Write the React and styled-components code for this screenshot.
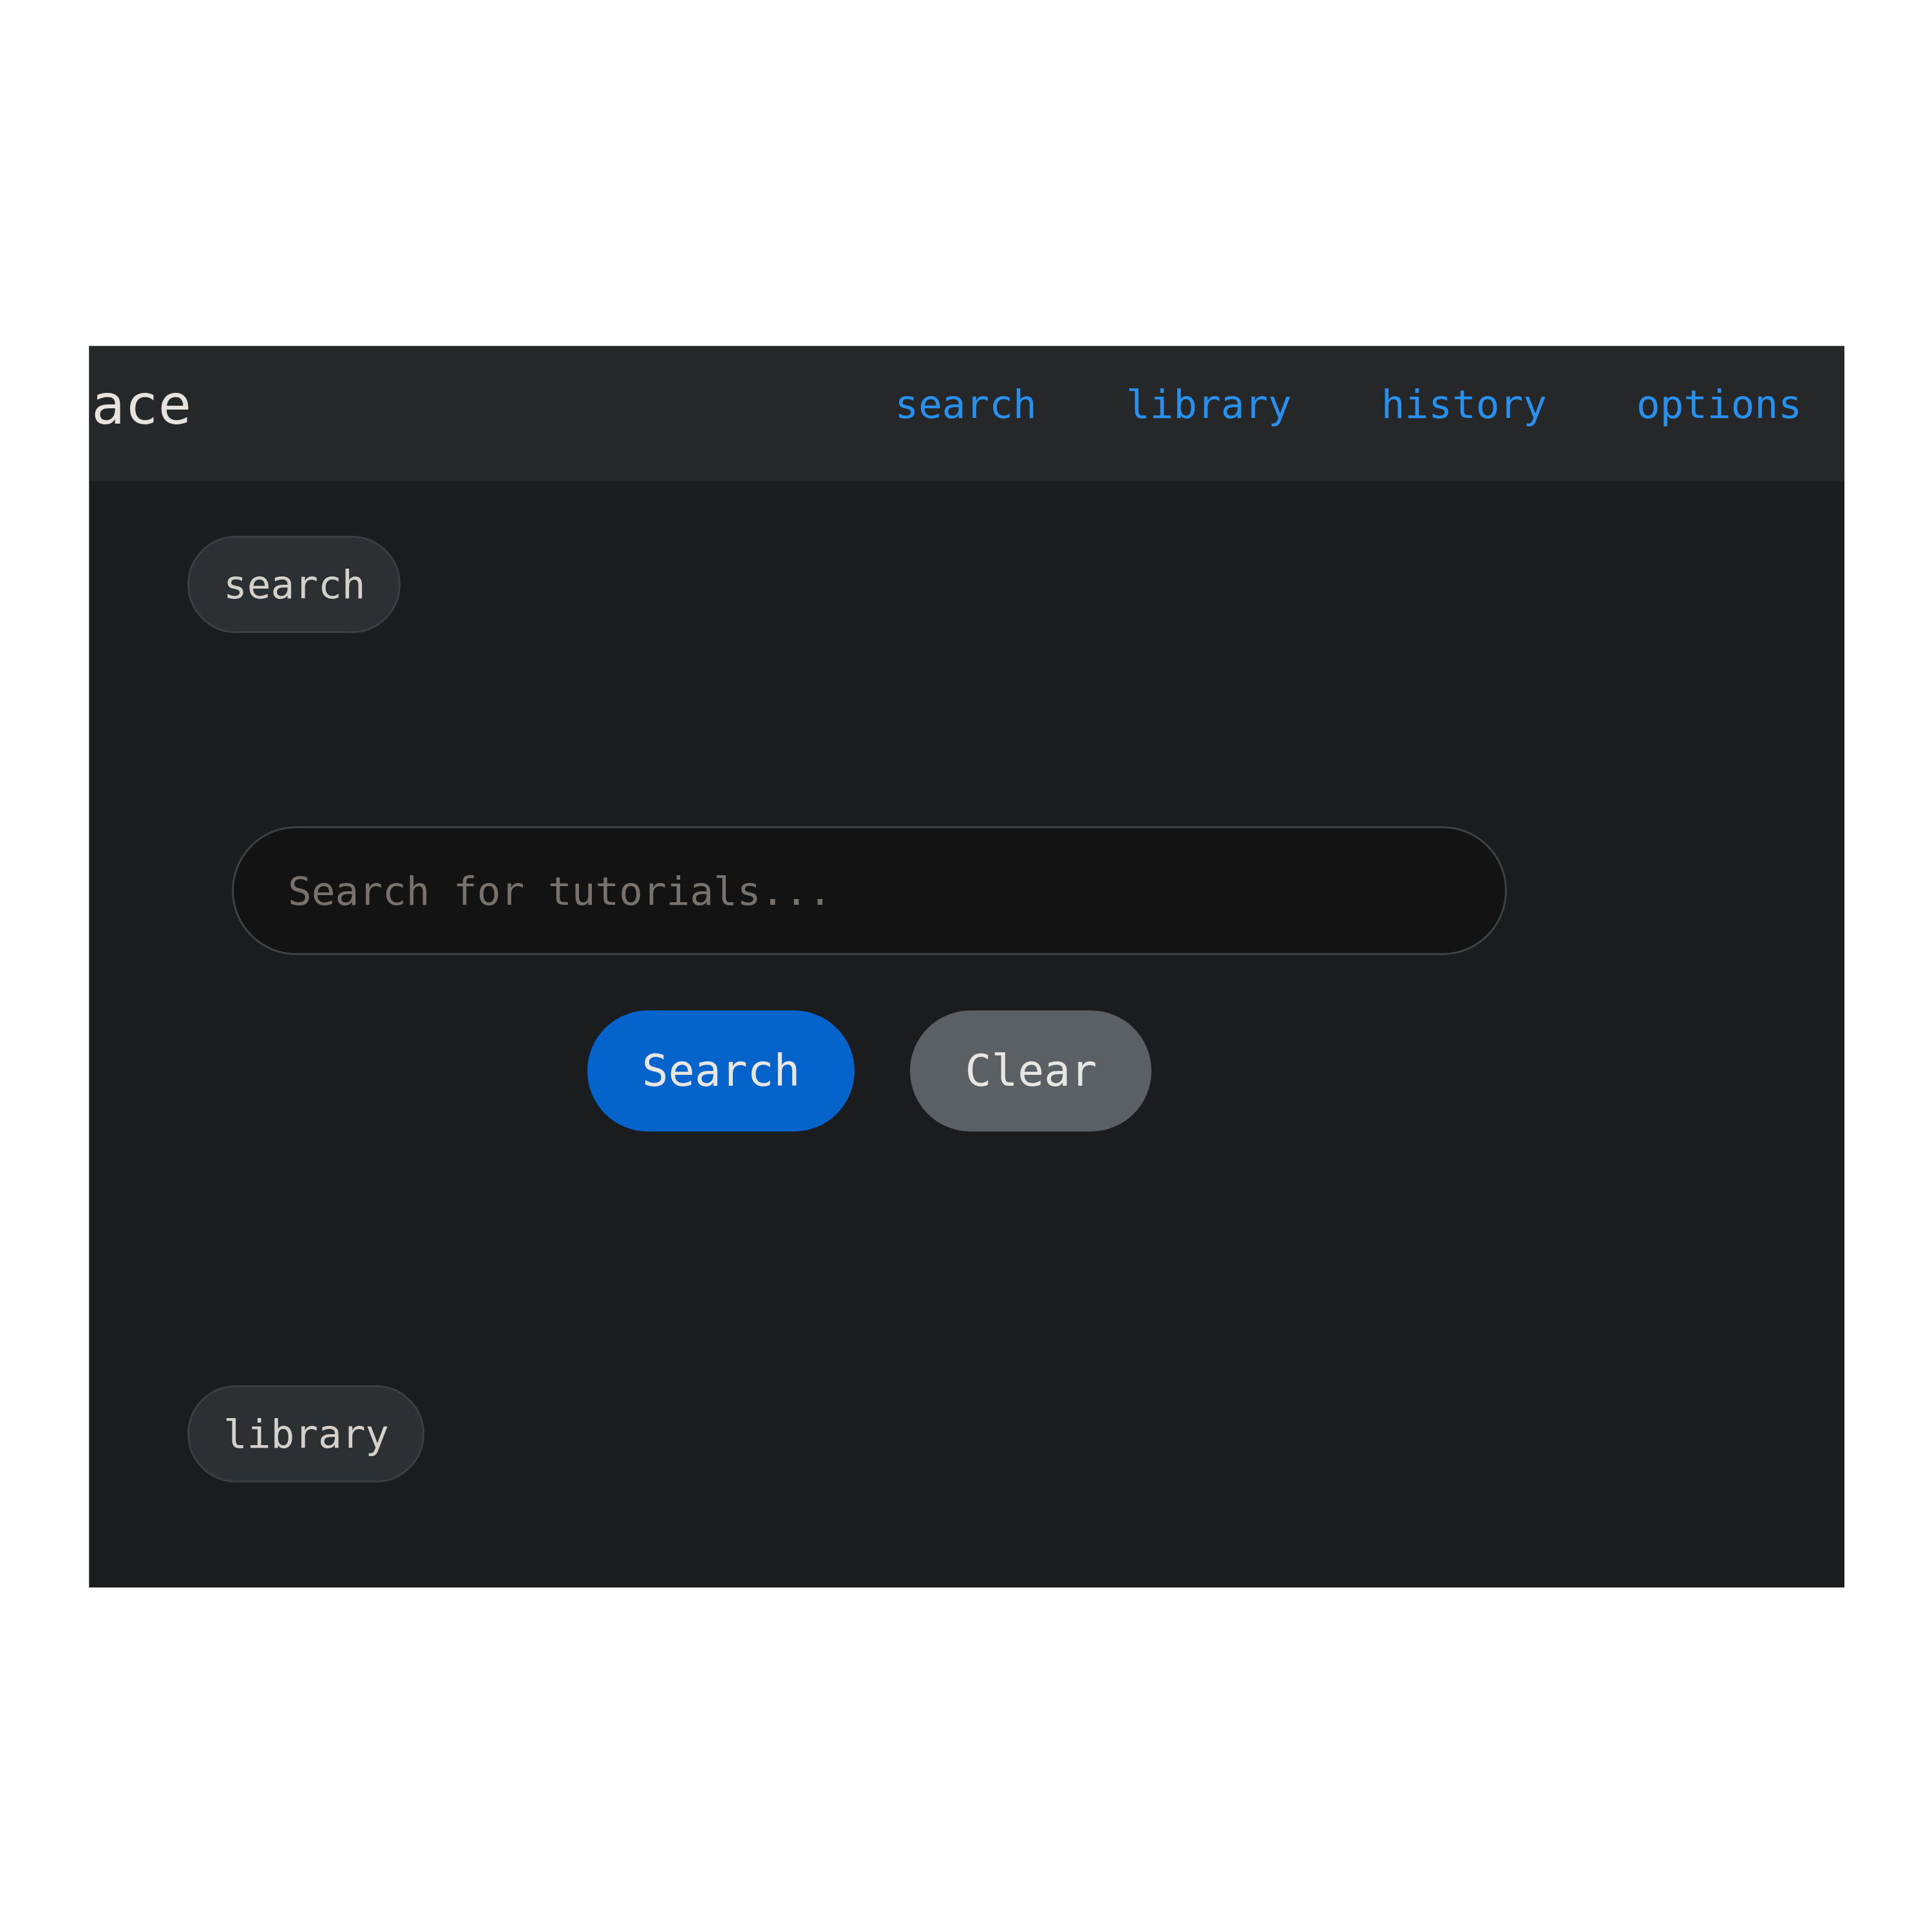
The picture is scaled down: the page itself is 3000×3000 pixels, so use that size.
import React from "react";
import styled, { createGlobalStyle } from "styled-components";

const GlobalStyle = createGlobalStyle`
  body {
    margin: 0;
    background: #ffffff;
    font-family: "DejaVu Sans Mono", "Liberation Mono", monospace;
  }
`;

const navLinks = ["search", "library", "history", "options"];

const App = () => {
  return (
    <>
      <GlobalStyle />
      <Panel>
        <Header>
          <Brand>ace</Brand>
          <Nav>
            {navLinks.map((link) => (
              <NavLink key={link} href={`#${link}`}>
                {link}
              </NavLink>
            ))}
          </Nav>
        </Header>
        <Main>
          <Section>
            <SectionTag>search</SectionTag>
            <SearchArea>
              <SearchInput placeholder="Search for tutorials..." />
              <ButtonRow>
                <ActionButton $variant="primary">Search</ActionButton>
                <ActionButton>Clear</ActionButton>
              </ButtonRow>
            </SearchArea>
          </Section>
          <Section $top={394}>
            <SectionTag>library</SectionTag>
          </Section>
        </Main>
      </Panel>
    </>
  );
};

const Panel = styled.div`
  margin: 537px 0 0 138px;
  width: 2726px;
  height: 1928px;
  background-color: #1b1c1e;
  border-top: 1px solid #4e5053;
  border-left: 1px solid #4e5053;
  box-sizing: border-box;
  overflow: hidden;
  display: flex;
  flex-direction: column;
`;

const Header = styled.header`
  height: 209px;
  flex-shrink: 0;
  box-sizing: border-box;
  padding: 0 66px 29px 0;
  background-color: #262729;
  display: flex;
  align-items: center;
  justify-content: space-between;
`;

const Brand = styled.div`
  font-size: 86px;
  color: #e6e3de;
  line-height: 1.164;
  margin-left: 3px;
`;

const Nav = styled.nav`
  display: flex;
  gap: 139px;
`;

const NavLink = styled.a`
  font-size: 61px;
  line-height: 72px;
  color: #2891f0;
  text-decoration: none;
`;

const Main = styled.main`
  flex: 1;
  padding: 85px 0 0 152px;
`;

const Section = styled.section`
  margin-top: ${(p) => (p.$top ? `${p.$top}px` : "0")};
`;

const SectionTag = styled.span`
  display: inline-block;
  height: 151px;
  box-sizing: border-box;
  padding: 0 52px 0 53px;
  border: 3px solid #3b3f42;
  border-radius: 999px;
  background-color: #2d3033;
  color: #d4d1cd;
  font-size: 61px;
  line-height: 145px;
`;

const SearchArea = styled.div`
  width: 1980px;
  margin: 300px 0 0 69px;
  display: flex;
  flex-direction: column;
  gap: 86px;
`;

const SearchInput = styled.input`
  width: 100%;
  height: 200px;
  box-sizing: border-box;
  padding: 0 60px 0 84px;
  border: 3px solid #3d4245;
  border-radius: 999px;
  background-color: #131313;
  color: #e6e3de;
  font-family: "DejaVu Sans Mono", "Liberation Mono", monospace;
  font-size: 61px;
  outline: none;

  &::placeholder {
    color: #77726c;
  }
`;

const ButtonRow = styled.div`
  display: flex;
  justify-content: center;
  gap: 86px;
`;

const ActionButton = styled.button`
  border: none;
  border-radius: 999px;
  padding: 53px 85px;
  font-family: "DejaVu Sans Mono", "Liberation Mono", monospace;
  font-size: 68px;
  line-height: 82px;
  color: #e8e6e3;
  background-color: ${(p) => (p.$variant === "primary" ? "#0563cc" : "#5a6064")};
  cursor: pointer;
`;

export default App;
